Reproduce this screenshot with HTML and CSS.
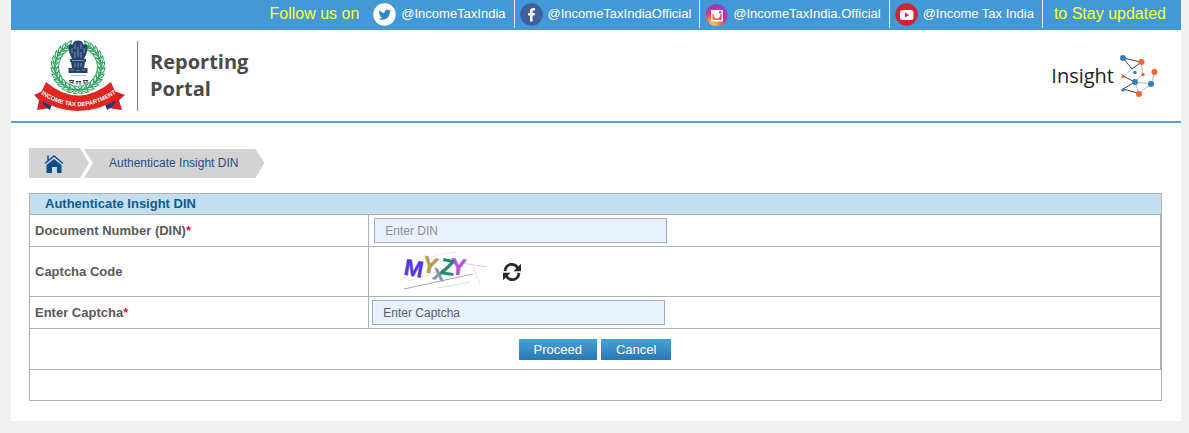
FILE: index.html
```html
<!DOCTYPE html>
<html lang="en">
<head>
<meta charset="utf-8">
<title>Reporting Portal - Authenticate Insight DIN</title>
<link rel="stylesheet" href="styles.css">
</head>
<body>
<div class="shell">
  <div class="social">
    <span class="social-note">Follow us on</span>
    <a class="social-link" href="#">
      <svg class="social-icon" viewBox="0 0 23 23" aria-hidden="true">
        <circle cx="11.500" cy="11.500" r="11.200" fill="#fff"/>
        <path transform="translate(5.500 5.500) scale(.52)" fill="#2e86c4" d="M23.953 4.570a10 10 0 01-2.825.775 4.958 4.958 0 002.163-2.723c-.951.555-2.005.959-3.127 1.184a4.920 4.920 0 00-8.384 4.482C7.690 8.095 4.067 6.130 1.640 3.162a4.822 4.822 0 00-.666 2.475c0 1.710.870 3.213 2.188 4.096a4.904 4.904 0 01-2.228-.616v.060a4.923 4.923 0 003.946 4.827 4.996 4.996 0 01-2.212.085 4.936 4.936 0 004.604 3.417 9.867 9.867 0 01-6.102 2.105c-.390 0-.779-.023-1.170-.067a13.995 13.995 0 007.557 2.209c9.053 0 13.998-7.496 13.998-13.985 0-.210 0-.420-.015-.630A9.935 9.935 0 0024 4.590z"/>
      </svg>
      <span>@IncomeTaxIndia</span>
    </a>
    <a class="social-link" href="#">
      <svg class="social-icon" viewBox="0 0 23 23" aria-hidden="true">
        <circle cx="11.500" cy="11.500" r="11.200" fill="#3f5f9f"/>
        <path fill="#fff" d="M10 18.500v-6H8V10h2V8.300C10 6 11.300 5 13.300 5H15v2.500h-1.200c-.9 0-1.200.4-1.200 1.200V10H15l-.4 2.500h-2v6z"/>
      </svg>
      <span>@IncomeTaxIndiaOfficial</span>
    </a>
    <a class="social-link" href="#">
      <svg class="social-icon" viewBox="0 0 23 23" aria-hidden="true">
        <defs>
          <radialGradient id="insta" cx=".3" cy="1" r="1.050">
            <stop offset="0" stop-color="#fdd56a"/>
            <stop offset=".3" stop-color="#f58a4b"/>
            <stop offset=".55" stop-color="#e0356f"/>
            <stop offset=".8" stop-color="#b035b0"/>
            <stop offset="1" stop-color="#6a4fcc"/>
          </radialGradient>
        </defs>
        <circle cx="11.500" cy="12" r="11" fill="url(#insta)"/>
        <path fill="#fff" fill-rule="evenodd" d="M6 7h12v11.500H6zM7.500 11v6h9v-6h-1.300a3.400 3.400 0 1 1-6.400 0zM14 8.200v2h2.500v-2z"/>
        <circle cx="12" cy="12.500" r="1.900" fill="none" stroke="#fff" stroke-width=".9"/>
      </svg>
      <span>@IncomeTaxIndia.Official</span>
    </a>
    <a class="social-link" href="#">
      <svg class="social-icon" viewBox="0 0 23 23" aria-hidden="true">
        <circle cx="11.500" cy="11.500" r="11.200" fill="#cf2435"/>
        <rect x="5" y="7" width="13.500" height="10" rx="2.500" fill="#fff"/>
        <path d="M10 9.500v5l4.200-2.500z" fill="#cf2435"/>
      </svg>
      <span>@Income Tax India</span>
    </a>
    <span class="social-note">to Stay updated</span>
  </div>

  <header class="masthead">
    <a class="brand" href="#">
      <svg class="seal" viewBox="6 6 91 71" role="img" aria-label="Income Tax Department">
        <defs>
          <g id="leaf">
            <path d="M52 10q-5 0-6.800-3.600 5-.6 6.800 3.600zM52 10q-4.500 0-6.500 4 5 .6 6.500-4z" fill="#e2f5e8" stroke="#2a9f5c" stroke-width="1"/>
            <path d="M51 10h-4" stroke="#2a9f5c" stroke-width=".8"/>
          </g>
          <g id="branch">
            <use href="#leaf" transform="rotate(24 50 33)"/>
            <use href="#leaf" transform="rotate(37 50 33)"/>
            <use href="#leaf" transform="rotate(50 50 33)"/>
            <use href="#leaf" transform="rotate(63 50 33)"/>
            <use href="#leaf" transform="rotate(76 50 33)"/>
            <use href="#leaf" transform="rotate(89 50 33)"/>
            <use href="#leaf" transform="rotate(102 50 33)"/>
            <use href="#leaf" transform="rotate(115 50 33)"/>
            <use href="#leaf" transform="rotate(128 50 33)"/>
            <use href="#leaf" transform="rotate(141 50 33)"/>
            <use href="#leaf" transform="rotate(154 50 33)"/>
            <use href="#leaf" transform="rotate(167 50 33)"/>
            <use href="#leaf" transform="rotate(180 50 33)"/>
          </g>
          <path id="motto" d="M10 58q41 29 81-1"/>
        </defs>
        <use href="#branch"/>
        <use href="#branch" transform="translate(100 0) scale(-1 1)"/>
        <path fill="#25456f" d="M46 7.500q4-2 8 0l1.500 3q4-1 4 3l-1 6-2.500 5.500H44l-2.500-5.500-1-6q0-4 4-3zM42 25h16v3H42zM43 28h14l-1 6H44zM40.500 34h19v5h-19z"/>
        <path fill="none" stroke="#9fb3ca" stroke-width=".7" d="M47 10v5M53 10v5M44 14v5M56 14v5M50 13v10M47 18v6M53 18v6M47 29v4M50 29v4M53 29v4M43 36h3M48.500 36.500h3M54 36h3M44 26.500h12"/>
        <path stroke="#8698ad" stroke-width=".8" stroke-dasharray="2 .6" d="M43 41.500h15"/>
        <path fill="none" stroke="#3b3b3b" stroke-width="1" d="M41 46.500h5M42 47v2.500M45 47v3M43 48.500h2M48 47.500h5M49 48v2.500M52 48v3M55 46.500h5M56 47v2.500M59 47v2.500M56 49h2"/>
        <path fill="#d71f26" d="M15 57 6 61l5 5-2 10 13-2 2-8zM86 57l11 4-6 5 3 10-14-2-3-8z"/>
        <path fill="#26366e" d="M14 66l10 4-2 6-6-4zM88 66l-11 4 2 6 6-4z"/>
        <path fill="#e0261f" d="M18 48q32 27 65 0l7 17q-40 24-80 0z"/>
        <text class="seal-text"><textPath href="#motto" startOffset="50%" text-anchor="middle">INCOME TAX DEPARTMENT</textPath></text>
      </svg>
      <span class="brand-name">Reporting<br>Portal</span>
    </a>
    <a class="insight" href="#">
      <span>Insight</span>
      <svg class="network" viewBox="0 0 40 44" aria-hidden="true">
        <g stroke="#333" stroke-width=".9" fill="none">
          <path d="M5 4l18 4M5 4l9 11M23 8l-9 7M5 22l12 6M17 28 5 35M5 35l15 4"/>
          <path stroke="#999" stroke-width=".7" d="M14 15l-8 7M23 8l2 13M17 28l4 11M21 39l12-9M17 28l16 2M33 30l4-12M17 28l8-8"/>
        </g>
        <g fill="#2f7fbd"><circle cx="5" cy="4" r="3"/><circle cx="17" cy="18.500" r="1.700"/><circle cx="17" cy="28" r="3"/><circle cx="33" cy="30" r="3"/><circle cx="5" cy="36" r="1.700"/></g>
        <g fill="#f1652c"><circle cx="23.500" cy="8" r="3"/><circle cx="36.500" cy="18" r="3"/><circle cx="5" cy="22.500" r="1.700"/><circle cx="25" cy="20.500" r="1.700"/><circle cx="21" cy="40" r="3"/></g>
      </svg>
    </a>
  </header>

  <main class="content">
    <nav class="crumbs" aria-label="Breadcrumb">
      <a class="crumb crumb-home" href="#" aria-label="Home">
        <svg class="home" viewBox="0 0 20 19" aria-hidden="true">
          <path d="M1 9.500 10 2l9 7.500M4 6.500V1.500" fill="none" stroke="#0b4f8c" stroke-width="1.500"/>
          <path fill="#0b4f8c" d="M10 5 17.500 11v8h-4.500v-6h-5V19H2.500v-8z"/>
        </svg>
      </a>
      <a class="crumb crumb-page" href="#">Authenticate Insight DIN</a>
    </nav>

    <form class="panel">
      <h1 class="panel-title">Authenticate Insight DIN</h1>
      <table class="fields">
        <tr class="row">
          <th scope="row"><label for="din">Document Number (DIN)<span class="required">*</span></label></th>
          <td class="cell-din"><input class="entry" id="din" type="text" placeholder="Enter DIN"></td>
        </tr>
        <tr class="row row-code">
          <th scope="row">Captcha Code</th>
          <td>
            <div class="captcha">
              <svg class="captcha-image" viewBox="0 0 90 42" role="img" aria-label="Captcha">
                <g fill="none" stroke-width="1">
                  <path stroke="#a99fc4" d="M4 38l69-15"/>
                  <path stroke="#c9efc4" d="M38 37l32-6"/>
                  <path stroke="#ecc3e6" d="M62 12l25 4"/>
                  <path stroke="#f1dde6" d="M73 14l7 20"/>
                  <path stroke="#e5e9e2" d="M1 29 36 4 57 1M8 30l45-14"/>
                </g>
                <g class="captcha-text">
                  <text x="4" y="25" font-size="23" fill="#5734e6" stroke="#5734e6" transform="rotate(10 12 18)">M</text>
                  <text x="23" y="22" font-size="23" fill="#b99a52" stroke="#b99a52" transform="rotate(14 30 12)">Y</text>
                  <text x="33" y="29" font-size="21" fill="#8494ab" stroke="#8494ab" transform="rotate(12 38 24)">x</text>
                  <text x="41" y="24" font-size="23" fill="#258872" stroke="#258872" transform="rotate(8 48 15)">Z</text>
                  <text x="51" y="24" font-size="23" fill="#b454d6" stroke="#b454d6" transform="rotate(6 60 15)">Y</text>
                </g>
              </svg>
              <button class="refresh" type="button" aria-label="Refresh captcha">
                <svg viewBox="0 0 18 18" aria-hidden="true">
                  <path fill="none" stroke="#2b2b2b" stroke-width="2.800" d="M2 8.200C2.800 0 11.500-.5 15 5.200M16 9.800C15.200 18 6.500 18.500 3 12.800"/>
                  <path fill="#2b2b2b" d="M18 .8v7.400h-7.600zM0 17.200V9.800h7.600z"/>
                </svg>
              </button>
            </div>
          </td>
        </tr>
        <tr class="row">
          <th scope="row"><label for="captcha">Enter Captcha<span class="required">*</span></label></th>
          <td><input class="entry entry-dark" id="captcha" type="text" placeholder="Enter Captcha"></td>
        </tr>
        <tr class="row">
          <td class="cell-actions" colspan="2">
            <div class="actions">
              <button class="action" type="submit">Proceed</button>
              <button class="action" type="button">Cancel</button>
            </div>
          </td>
        </tr>
      </table>
      <div class="panel-foot"></div>
    </form>
  </main>
</div>
</body>
</html>
```
FILE: styles.css
```css
* { box-sizing: border-box; }

body {
  margin: 0;
  padding: 0 8px 12px 11px;
  background: #f1f1f1;
  font-family: "Liberation Sans", Arial, sans-serif;
  font-size: 13px;
  color: #5a5a5a;
}

a { color: inherit; text-decoration: none; }
svg { display: block; }
button, input { font: inherit; }

.shell { background: #fff; }

/* social bar */
.social {
  display: flex;
  justify-content: flex-end;
  height: 30px;
  padding-right: 15px;
  background: #4299d6;
  color: #fff;
}
.social-note {
  padding: 0 9px 0 11px;
  font-size: 16px;
  line-height: 27px;
  color: #ff3;
}
.social-note:last-child { padding-right: 0; }
.social-link {
  display: flex;
  align-items: center;
  gap: 5px;
  height: 28px;
  padding: 0 8px 0 5px;
  border-right: 1px solid #e4f1fa;
  line-height: 28px;
}
.social-icon { width: 23px; height: 23px; }

/* masthead */
.masthead {
  display: flex;
  justify-content: space-between;
  align-items: center;
  height: 93px;
  padding: 0 23px 0 23px;
  border-bottom: 2px solid #5ea3cf;
}
.brand { display: flex; align-items: center; gap: 12px; }
.seal { width: 91px; height: 71px; }
.seal-text {
  font-family: "Liberation Sans Narrow", "Liberation Sans", Arial, sans-serif;
  font-size: 6px;
  font-weight: bold;
  fill: #fff;
}
.brand-name {
  height: 70px;
  padding: 7px 0 0 12px;
  border-left: 1px solid #777;
  font: bold 20px/27px "Open Sans", sans-serif;
  color: #4a4a4a;
}
.insight {
  display: flex;
  align-items: center;
  gap: 4px;
  font: 20px/28px "Open Sans", sans-serif;
  color: #222;
}
.network { width: 40px; height: 44px; }

/* breadcrumb */
.content { padding: 25px 19px 20px 18px; }
.crumbs { display: flex; margin-bottom: 15px; }
.crumb {
  display: flex;
  align-items: center;
  height: 30px;
  background: #d3d3d3;
}
.crumb-home {
  width: 60px;
  padding-left: 15px;
  clip-path: polygon(0 0, 51px 0, 100% 50%, 51px 100%, 0 100%);
}
.crumb-page {
  margin-left: -5px;
  padding: 0 26px 0 25px;
  font-size: 12px;
  line-height: 30px;
  color: #1c4f86;
  clip-path: polygon(0 1px, calc(100% - 9px) 1px, 100% 50%, calc(100% - 9px) 100%, 0 100%, 9px 50%);
}
.home { width: 20px; height: 19px; }

/* form panel */
.panel { border: 1px solid #b0b1b3; }
.panel-title {
  margin: 0;
  padding: 0 15px;
  border-bottom: 1px solid #b0b1b3;
  background: #c3dff1;
  font-size: 13px;
  line-height: 20px;
  color: #0f5a8f;
}
.fields {
  width: 100%;
  border-collapse: separate;
  border-spacing: 0;
  table-layout: fixed;
}
.row { height: 32px; }
.row-code { height: 50px; }
.row th, .row td {
  padding: 0 3px;
  border-right: 1px solid #b0b1b3;
  border-bottom: 1px solid #b0b1b3;
  text-align: left;
}
.row th { width: 30%; padding-left: 5px; }
.row .cell-din { padding-left: 5px; }
.row .cell-actions { height: 41px; }
.required { color: #e8112d; }
.entry {
  display: block;
  width: 293px;
  height: 25px;
  padding: 0 10px;
  border: 1px solid #9bb0c6;
  background: #e8f1fc;
  font-size: 12px;
  color: #555;
}
.entry::placeholder { color: #8c9097; opacity: 1; }
.entry-dark::placeholder { color: #5a5d63; }

.captcha {
  display: flex;
  align-items: center;
  gap: 13px;
  padding-left: 28px;
}
.captcha-image { width: 90px; height: 42px; }
.captcha-text {
  font-family: "Liberation Sans", Arial, sans-serif;
  font-weight: bold;
  stroke-width: 0.4;
}
.refresh {
  width: 18px;
  height: 18px;
  padding: 0;
  border: 0;
  background: none;
}

.actions { display: flex; justify-content: center; gap: 4px; }
.action {
  height: 21px;
  padding: 0 15px;
  border: 0;
  background: linear-gradient(#45a3d9, #2878b3);
  color: #fff;
}
.panel-foot { height: 30px; }
```
